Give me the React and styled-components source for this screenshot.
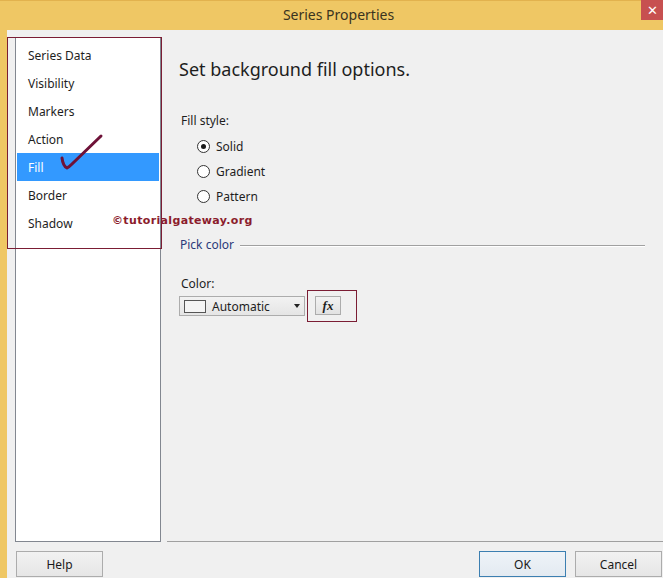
import React from "react";
import styled, { createGlobalStyle } from "styled-components";

const GlobalStyle = createGlobalStyle`
  html, body {
    margin: 0;
    padding: 0;
    background: #f0f0f0;
  }
  body {
    font-family: "Noto Sans", "Liberation Sans", sans-serif;
    color: #1e1e1e;
  }
`;

const GOLD = "#efc764";
const MAROON = "#7b1d34";

const pages = ["Series Data", "Visibility", "Markers", "Action", "Fill", "Border", "Shadow"];
const fillStyles = ["Solid", "Gradient", "Pattern"];

const Window = styled.div`
  width: 663px;
  height: 578px;
  display: flex;
  flex-direction: column;
  overflow: hidden;
  background: #f0f0f0;
`;

const TitleBar = styled.div`
  height: 30px;
  flex: none;
  display: flex;
  align-items: flex-start;
  background: ${GOLD};
  border-top: 1px solid #e2b24e;
  box-sizing: border-box;
`;

const Title = styled.div`
  flex: 1;
  text-align: center;
  padding-left: 36px;
  line-height: 28px;
  font-size: 14px;
  color: #3a3320;
`;

const CloseButton = styled.div`
  width: 22px;
  height: 20px;
  margin-top: -1px;
  background: #c75050;
  color: #fff;
  font-size: 13px;
  line-height: 20px;
  text-align: center;
`;

const Frame = styled.div`
  flex: 1;
  display: flex;
  min-height: 0;
`;

const FrameEdge = styled.div`
  width: 7px;
  flex: none;
  background: ${GOLD};
`;

const Client = styled.div`
  flex: 1;
  display: flex;
  flex-direction: column;
  min-width: 0;
`;

const Main = styled.div`
  flex: 1;
  display: flex;
  position: relative;
`;

const Sidebar = styled.div`
  width: 154px;
  flex: none;
  padding: 7px 0 0 8px;
  box-sizing: border-box;
  position: relative;
`;

const ListBox = styled.div`
  width: 146px;
  height: 505px;
  box-sizing: border-box;
  background: #fff;
  border: 1px solid #828790;
  padding-top: 3px;
`;

const ListItem = styled.div`
  height: 28px;
  margin: 0 1px;
  padding-left: 11px;
  display: flex;
  align-items: center;
  font-size: 12px;
  color: ${(p) => (p.$selected ? "#fff" : "#1e1e1e")};
  background: ${(p) => (p.$selected ? "#3399ff" : "transparent")};
`;

const RedFrame = styled.div`
  position: absolute;
  box-sizing: border-box;
  border: 1.5px solid ${MAROON};
  pointer-events: none;
`;

const SideMark = styled(RedFrame)`
  left: 0;
  top: 7px;
  width: 155px;
  height: 212px;
`;

const Watermark = styled.div`
  position: absolute;
  left: 105px;
  top: 184px;
  font-family: "DejaVu Sans", Verdana, sans-serif;
  font-weight: bold;
  font-size: 11px;
  color: #8b1c2c;
  letter-spacing: 0.35px;
`;

const Check = styled.svg`
  position: absolute;
  left: 50px;
  top: 68px;
`;

const Content = styled.div`
  flex: 1;
  margin-left: 6px;
  padding-left: 12px;
  border-bottom: 1px solid #a0a0a0;
  display: flex;
  flex-direction: column;
  align-items: flex-start;
`;

const Heading = styled.div`
  margin-top: 27px;
  font-size: 18px;
  line-height: 24px;
  color: #1e1e1e;
`;

const Label = styled.div`
  margin-top: ${(p) => p.$top}px;
  padding-left: 2px;
  font-size: 12px;
  line-height: 16px;
`;

const RadioGroup = styled.div`
  margin-top: 5px;
  padding-left: 18px;
  display: flex;
  flex-direction: column;
`;

const RadioRow = styled.label`
  height: 25px;
  display: flex;
  align-items: center;
  gap: 6px;
  font-size: 12px;
`;

const RadioCircle = styled.span`
  width: 13px;
  height: 13px;
  box-sizing: border-box;
  border-radius: 50%;
  border: 1px solid #333;
  background: #fff;
  display: flex;
  align-items: center;
  justify-content: center;
  &::after {
    content: "";
    width: 5px;
    height: 5px;
    border-radius: 50%;
    background: ${(p) => (p.$checked ? "#1a1a1a" : "transparent")};
  }
`;

const GroupHeader = styled.div`
  margin-top: 28px;
  align-self: stretch;
  display: flex;
  align-items: center;
  gap: 6px;
  padding-left: 1px;
  margin-right: 18px;
  font-size: 12px;
  line-height: 16px;
  color: #2b3a7a;
  &::after {
    content: "";
    flex: 1;
    height: 1px;
    background: #a0a0a0;
    box-shadow: 0 1px 0 #fff;
  }
`;

const ControlRow = styled.div`
  margin-top: 4px;
  display: flex;
  align-items: flex-start;
  gap: 10px;
`;

const Combo = styled.div`
  width: 126px;
  height: 20px;
  box-sizing: border-box;
  border: 1px solid #acacac;
  background: linear-gradient(#f2f2f2, #e5e5e5);
  display: flex;
  align-items: center;
  padding-left: 4px;
  font-size: 12px;
`;

const Swatch = styled.span`
  width: 22px;
  height: 13px;
  box-sizing: border-box;
  border: 1px solid #555;
  background: #f4f4f4;
  margin-right: 6px;
`;

const ComboText = styled.span`
  flex: 1;
`;

const Arrow = styled.span`
  width: 0;
  height: 0;
  border-left: 3.5px solid transparent;
  border-right: 3.5px solid transparent;
  border-top: 4px solid #222;
  margin-right: 4px;
`;

const FxWrap = styled.div`
  position: relative;
`;

const FxButton = styled.div`
  width: 26px;
  height: 19px;
  box-sizing: border-box;
  border: 1px solid #acacac;
  background: linear-gradient(#f2f2f2, #e2e2e2);
  display: flex;
  align-items: center;
  justify-content: center;
  font-family: "Liberation Serif", "DejaVu Serif", serif;
  font-style: italic;
  font-weight: bold;
  font-size: 13px;
`;

const FxMark = styled(RedFrame)`
  left: -8px;
  top: -6px;
  width: 50px;
  height: 32px;
  border-width: 1px;
`;

const Footer = styled.div`
  height: 36px;
  flex: none;
  display: flex;
  align-items: flex-start;
  padding: 9px 1px 0 9px;
  box-sizing: border-box;
`;

const Button = styled.div`
  width: 87px;
  height: 26px;
  box-sizing: border-box;
  border: 1px solid ${(p) => (p.$primary ? "#3c7fb1" : "#acacac")};
  background: ${(p) =>
    p.$primary ? "linear-gradient(#eef3f8, #e3eaf1)" : "linear-gradient(#f2f2f2, #e6e6e6)"};
  display: flex;
  align-items: center;
  justify-content: center;
  font-size: 12px;
  color: #1a1a1a;
  margin-left: ${(p) => p.$gap || 0}px;
`;

const Spacer = styled.div`
  flex: 1;
`;

export default function App() {
  return (
    <Window>
      <GlobalStyle />
      <TitleBar>
        <Title>Series Properties</Title>
        <CloseButton>✕</CloseButton>
      </TitleBar>
      <Frame>
        <FrameEdge />
        <Client>
          <Main>
            <Sidebar>
              <ListBox>
                {pages.map((p) => (
                  <ListItem key={p} $selected={p === "Fill"}>
                    {p}
                  </ListItem>
                ))}
              </ListBox>
              <SideMark />
            </Sidebar>
            <Content>
              <Heading>Set background fill options.</Heading>
              <Label $top={32}>Fill style:</Label>
              <RadioGroup>
                {fillStyles.map((s) => (
                  <RadioRow key={s}>
                    <RadioCircle $checked={s === "Solid"} />
                    {s}
                  </RadioRow>
                ))}
              </RadioGroup>
              <GroupHeader>Pick color</GroupHeader>
              <Label $top={23}>Color:</Label>
              <ControlRow>
                <Combo>
                  <Swatch />
                  <ComboText>Automatic</ComboText>
                  <Arrow />
                </Combo>
                <FxWrap>
                  <FxButton>fx</FxButton>
                  <FxMark />
                </FxWrap>
              </ControlRow>
            </Content>
            <Watermark>©tutorialgateway.org</Watermark>
            <Check width="60" height="80" viewBox="0 0 60 80">
              <path
                d="M5 60 Q6 68 10 70 Q12 69 15 66 L44 38"
                fill="none"
                stroke="#6e1238"
                strokeWidth="3"
                strokeLinecap="round"
                strokeLinejoin="round"
              />
            </Check>
          </Main>
          <Footer>
            <Button>Help</Button>
            <Spacer />
            <Button $primary>OK</Button>
            <Button $gap={9}>Cancel</Button>
          </Footer>
        </Client>
      </Frame>
    </Window>
  );
}
